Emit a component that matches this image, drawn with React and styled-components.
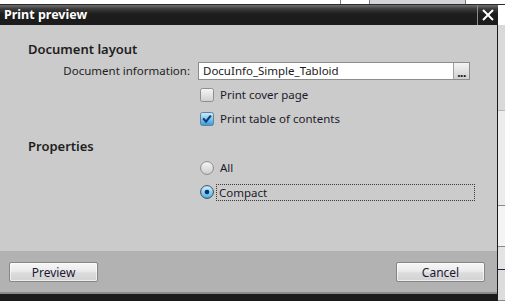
import React from "react";
import styled, { createGlobalStyle } from "styled-components";

const Global = createGlobalStyle`
  html, body { margin: 0; padding: 0; background: #ffffff; overflow: hidden; }
  body { font-family: "Noto Sans", "Open Sans", sans-serif; }
`;

const Desktop = styled.div`
  width: 505px;
  height: 301px;
  display: flex;
  flex-direction: column;
  overflow: hidden;
`;

const TopStrip = styled.div`
  height: 4px;
  display: flex;
  background: #ffffff;
  border-bottom: 1px solid #2a2a2a;
`;

const StripCell = styled.div`
  width: ${(p) => p.$w}px;
  background: ${(p) => p.$bg || "transparent"};
  border-left: ${(p) => (p.$line ? "1px solid #7a7a7a" : "none")};
`;

const Main = styled.div`
  flex: 1;
  display: flex;
  min-height: 0;
`;

const Dialog = styled.div`
  width: 498px;
  display: flex;
  flex-direction: column;
  background: #1b1b1b;
`;

const TitleBar = styled.div`
  height: 20px;
  display: flex;
  align-items: stretch;
  background: linear-gradient(#6e6e6e 0px, #3a3a3a 4px, #1d1d1d 9px, #1b1b1b 20px);
`;

const Title = styled.div`
  flex: 1;
  padding-left: 4px;
  color: #ffffff;
  font-weight: 700;
  font-size: 12.5px;
  line-height: 20px;
`;

const CloseButton = styled.div`
  width: 19px;
  border-left: 1px solid #8a8a8a;
  display: flex;
  align-items: center;
  justify-content: center;
  margin-right: 1px;
`;

const Body = styled.div`
  flex: 1;
  background: #cbcbcb;
  margin-right: 1px;
  padding: 15px 0 0 28px;
  display: flex;
  flex-direction: column;
`;

const Heading = styled.div`
  font-size: 13px;
  line-height: 18px;
  font-weight: 600;
  color: #1e1e1e;
  margin-top: ${(p) => p.$mt || 0}px;
`;

const Form = styled.div`
  display: grid;
  grid-template-columns: 162px 272px;
  column-gap: 8px;
  grid-auto-rows: 24px;
  align-items: center;
  margin-top: ${(p) => p.$mt || 0}px;
`;

const Label = styled.div`
  font-size: 11.5px;
  color: #1e1e1e;
  text-align: right;
  line-height: 16px;
`;

const InputBox = styled.div`
  height: 18px;
  box-sizing: border-box;
  background: #ffffff;
  border: 1px solid #8c8c8c;
  display: flex;
  align-items: stretch;
`;

const InputText = styled.div`
  flex: 1;
  font-size: 11.5px;
  line-height: 16px;
  padding-left: 4px;
  color: #1a1a1a;
`;

const BrowseButton = styled.div`
  width: 15px;
  background: linear-gradient(#f4f4f4, #d0d0d0);
  border-left: 1px solid #a0a0a0;
  display: flex;
  align-items: flex-end;
  justify-content: center;
  font-size: 12px;
  font-weight: 700;
  line-height: 13px;
  color: #111;
  letter-spacing: -0.5px;
`;

const Option = styled.div`
  grid-column: 2;
  display: flex;
  align-items: center;
  padding-left: 2px;
  gap: 5px;
`;

const OptionText = styled.span`
  font-size: 11.5px;
  line-height: 16px;
  color: #1c1a2a;
  padding: 0 0 0 1px;
  box-sizing: border-box;
  ${(p) =>
    p.$focus &&
    `flex: 1; border: 1px dotted #3a3a3a; margin-left: -3px; margin-right: -5px; padding-left: 2px; height: 17px;`}
`;

const Footer = styled.div`
  height: 41px;
  background: #b2b2b2;
  margin-right: 1px;
  border-bottom: 2px solid #8a8a8a;
  display: flex;
  align-items: center;
  justify-content: space-between;
  padding: 0 12px 0 9px;
`;

const Button = styled.div`
  width: 89px;
  height: 20px;
  box-sizing: border-box;
  border: 1px solid #858585;
  border-radius: 2px;
  background: linear-gradient(#f6f6f6 0%, #ebebeb 45%, #dcdcdc 55%, #d2d2d2 100%);
  box-shadow: inset 0 0 0 1px rgba(255, 255, 255, 0.6);
  display: flex;
  align-items: center;
  justify-content: center;
  font-size: 12px;
  color: #1c1838;
  margin-top: 1px;
`;

const BottomEdge = styled.div`
  height: 7px;
  background: #1b1b1b;
`;

const SideStrip = styled.div`
  flex: 1;
  display: flex;
  flex-direction: column;
  background: #f2f2f2;
`;

const SideBand = styled.div`
  height: ${(p) => p.$h}px;
  background: ${(p) => p.$bg};
  border-bottom: ${(p) => (p.$line ? `1px solid ${p.$line}` : "none")};
`;

const CheckBox = ({ checked }) => (
  <svg width="14" height="14" viewBox="0 0 14 14">
    <defs>
      <linearGradient id="cbOff" x1="0" y1="0" x2="0" y2="1">
        <stop offset="0" stopColor="#f7f7f7" />
        <stop offset="1" stopColor="#cfcfcf" />
      </linearGradient>
      <linearGradient id="cbOn" x1="0" y1="0" x2="0" y2="1">
        <stop offset="0" stopColor="#cfeefc" />
        <stop offset="0.5" stopColor="#7fc8ef" />
        <stop offset="1" stopColor="#2f9ad8" />
      </linearGradient>
    </defs>
    <rect x="0.5" y="0.5" width="13" height="13" rx="2" fill={checked ? "url(#cbOn)" : "url(#cbOff)"} stroke={checked ? "#6a7f95" : "#8e8e8e"} />
    {checked && <path d="M3.2 6.4 L6 9.6 L10.8 3.6" fill="none" stroke="#123a74" strokeWidth="2.2" />}
  </svg>
);

const Radio = ({ checked }) => (
  <svg width="14" height="14" viewBox="0 0 14 14">
    <defs>
      <linearGradient id="rOff" x1="0" y1="0" x2="0" y2="1">
        <stop offset="0" stopColor="#f6f6f6" />
        <stop offset="1" stopColor="#cdcdcd" />
      </linearGradient>
      <linearGradient id="rOn" x1="0" y1="0" x2="0" y2="1">
        <stop offset="0" stopColor="#d6f2fd" />
        <stop offset="1" stopColor="#46b0e6" />
      </linearGradient>
    </defs>
    <circle cx="7" cy="7" r="6.4" fill={checked ? "url(#rOn)" : "url(#rOff)"} stroke={checked ? "#3c4a58" : "#8a8a8a"} strokeWidth="1" />
    {checked && <circle cx="7" cy="7" r="2.3" fill="#0c2f6a" />}
  </svg>
);

export default function App() {
  return (
    <>
      <Global />
      <Desktop>
        <TopStrip>
          <StripCell $w={342} />
          <StripCell $w={28} $line />
          <StripCell $w={96} $bg="#d4d4d8" $line />
          <StripCell $w={39} $line />
        </TopStrip>
        <Main>
          <Dialog>
            <TitleBar>
              <Title>Print preview</Title>
              <CloseButton>
                <svg width="12" height="12" viewBox="0 0 12 12">
                  <path d="M1 1 L11 11 M11 1 L1 11" stroke="#ffffff" strokeWidth="2" />
                </svg>
              </CloseButton>
            </TitleBar>
            <Body>
              <Heading>Document layout</Heading>
              <Form $mt={1}>
                <Label>Document information:</Label>
                <InputBox>
                  <InputText>DocuInfo_Simple_Tabloid</InputText>
                  <BrowseButton>...</BrowseButton>
                </InputBox>
                <Option>
                  <CheckBox />
                  <OptionText>Print cover page</OptionText>
                </Option>
                <Option>
                  <CheckBox checked />
                  <OptionText>Print table of contents</OptionText>
                </Option>
              </Form>
              <Heading $mt={6}>Properties</Heading>
              <Form $mt={1}>
                <Option>
                  <Radio />
                  <OptionText>All</OptionText>
                </Option>
                <Option>
                  <Radio checked />
                  <OptionText $focus>Compact</OptionText>
                </Option>
              </Form>
            </Body>
            <Footer>
              <Button>Preview</Button>
              <Button>Cancel</Button>
            </Footer>
            <BottomEdge />
          </Dialog>
          <SideStrip>
            <SideBand $h={20} $bg="#ffffff" />
            <SideBand $h={85} $bg="#d9d9d9" $line="#b8b8b8" />
            <SideBand $h={94} $bg="#ececec" $line="#8a8a8a" />
            <SideBand $h={40} $bg="#f4f4f4" $line="#8a8a8a" />
            <SideBand $h={22} $bg="#e4e4e4" $line="#1e2540" />
            <SideBand $h={30} $bg="#dcdcdc" $line="#8a8a8a" />
          </SideStrip>
        </Main>
      </Desktop>
    </>
  );
}
